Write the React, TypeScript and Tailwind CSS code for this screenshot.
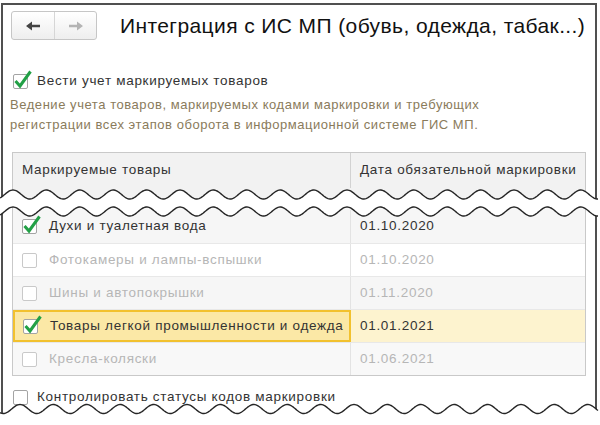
import React from "react";

const P = 33.4;
function wavePts(cy: number, amp: number, phase: number, x0: number, x1: number): [number, number][] {
  const pts: [number, number][] = [];
  for (let x = x0; x <= x1; x += 1) {
    pts.push([x, cy - amp * Math.cos((2 * Math.PI * (x - phase)) / P)]);
  }
  return pts;
}
const toD = (pts: [number, number][], start = true) =>
  pts.map((p, i) => (i === 0 && start ? "M" : "L") + p[0].toFixed(1) + " " + p[1].toFixed(2)).join(" ");

const w1 = wavePts(8.5, 4.5, 13, 0, 598);
const w2 = wavePts(25.5, 4.5, 13, 0, 598);
const tear1Fill = toD(w1) + " " + toD([...w2].reverse(), false) + " Z";
const w3 = wavePts(8, 4.5, 20, 0, 598);
const tear2Fill = toD(w3) + " L600 30 L0 30 Z";

function Check({ checked, disabled }: { checked?: boolean; disabled?: boolean }) {
  return (
    <span
      className={
        "relative inline-block h-[15px] w-[15px] shrink-0 rounded-[2px] border bg-white " +
        (disabled ? "border-[#c9c9c9]" : "border-[#a4a4a4]")
      }
    >
      {checked && (
        <svg className="absolute left-[-1px] top-[-5px]" width="20" height="20" viewBox="0 0 20 20">
          <path d="M2.5 11 L7 16 L17.5 1.5" stroke="#22a046" strokeWidth="3" fill="none" strokeLinejoin="miter" />
        </svg>
      )}
    </span>
  );
}

type Row = { name: string; date: string; checked?: boolean; disabled?: boolean; bg: string; active?: boolean };
const rows: Row[] = [
  { name: "Духи и туалетная вода", date: "01.10.2020", checked: true, bg: "bg-[#f6f6f6]" },
  { name: "Фотокамеры и лампы-вспышки", date: "01.10.2020", disabled: true, bg: "bg-white" },
  { name: "Шины и автопокрышки", date: "01.11.2020", disabled: true, bg: "bg-[#f6f6f6]" },
  { name: "Товары легкой промышленности и одежда", date: "01.01.2021", checked: true, bg: "bg-[#fdf3cf]", active: true },
  { name: "Кресла-коляски", date: "01.06.2021", disabled: true, bg: "bg-[#f8f8f8]" },
];

export default function App() {
  return (
    <div className="flex h-[425px] w-[600px] flex-col overflow-hidden bg-white pt-[3px] font-['Liberation_Sans',Arial,sans-serif] text-[13.5px] tracking-[0.7px] text-[#333]">
      {/* upper part of the form */}
      <div className="ml-[1px] flex h-[202px] w-[596px] shrink-0 flex-col border-2 border-b-0 border-[#505050]">
        <div className="ml-[8px] mt-[6px] flex h-[29px] items-center">
          <div className="flex h-[29px] w-[86px] rounded-[3px] border border-[#c6c6c6] bg-gradient-to-b from-white to-[#eeeeee]">
            <div className="flex w-[43px] items-center justify-center border-r border-[#d6d6d6]">
              <svg width="14" height="10" viewBox="0 0 14 10">
                <path d="M0 5 L6 0.5 L6 3.8 L14 3.8 L14 6.2 L6 6.2 L6 9.5 Z" fill="#444" />
              </svg>
            </div>
            <div className="flex flex-1 items-center justify-center">
              <svg width="14" height="10" viewBox="0 0 14 10">
                <path d="M14 5 L8 0.5 L8 3.8 L0 3.8 L0 6.2 L8 6.2 L8 9.5 Z" fill="#b4b4b4" />
              </svg>
            </div>
          </div>
          <div className="ml-[23px] whitespace-nowrap text-[21px] tracking-[0.4px] text-[#111]">
            Интеграция с ИС МП (обувь, одежда, табак...)
          </div>
        </div>

        <div className="ml-[10px] mt-[31px] flex h-[20px] items-center gap-[9px]">
          <Check checked />
          <span className="whitespace-nowrap">Вести учет маркируемых товаров</span>
        </div>

        <div className="ml-[7px] mt-[4px] text-[13px] leading-[20px] tracking-[0.55px] text-[#8a7b5b]">
          <div className="whitespace-nowrap">Ведение учета товаров, маркируемых кодами маркировки и требующих</div>
          <div className="whitespace-nowrap">регистрации всех этапов оборота в информационной системе ГИС МП.</div>
        </div>

        <div className="mx-[9px] mt-[17px] flex h-[53px] border border-b-0 border-[#c9c9c9] bg-[#f2f2f2]">
          <div className="flex h-[35px] w-[338px] items-center border-r border-[#d2d2d2] pl-[9px]">Маркируемые товары</div>
          <div className="flex h-[35px] flex-1 items-center whitespace-nowrap pl-[9px]">Дата обязательной маркировки</div>
        </div>
      </div>

      {/* torn gap */}
      <div className="relative z-10 mb-[-15px] mt-[-19px] h-[34px] shrink-0">
        <svg width="600" height="34" viewBox="0 0 600 34">
          <path d={tear1Fill} fill="#fff" />
          <path d={toD(w1)} stroke="#262626" strokeWidth="1.4" fill="none" />
          <path d={toD(w2)} stroke="#262626" strokeWidth="1.4" fill="none" />
        </svg>
      </div>

      {/* lower part of the form */}
      <div className="ml-[1px] flex h-[220px] w-[596px] shrink-0 flex-col border-x-2 border-[#505050]">
        <div className="mx-[9px] flex flex-col border border-t-0 border-[#c9c9c9]">
          {rows.map((r, i) => (
            <div
              key={r.name}
              className={
                "flex " + r.bg + " " + (i === 0 ? "h-[38px] pt-[5px]" : "h-[33px] border-t border-[#e8e8e8]")
              }
            >
              <div
                className={
                  "flex w-[338px] items-center gap-[12px] " +
                  (r.active ? "border-2 border-[#f2c12e] bg-[#fbe8a6] pl-[8px]" : "border-r border-[#e3e3e3] pl-[9px]")
                }
              >
                <Check checked={r.checked} disabled={r.disabled} />
                <span className={"whitespace-nowrap " + (r.disabled ? "text-[#b6b6b6]" : "text-[#333]")}>{r.name}</span>
              </div>
              <div className={"flex flex-1 items-center pl-[9px] " + (r.disabled ? "text-[#b6b6b6]" : "text-[#333]")}>
                {r.date}
              </div>
            </div>
          ))}
        </div>

        <div className="ml-[10px] mt-[11px] flex h-[20px] items-center gap-[9px]">
          <Check />
          <span className="whitespace-nowrap">Контролировать статусы кодов маркировки</span>
        </div>
      </div>

      {/* bottom torn edge */}
      <div className="relative z-10 mt-[-24px] h-[24px] shrink-0">
        <svg width="600" height="24" viewBox="0 0 600 24">
          <path d={tear2Fill} fill="#fff" />
          <path d={toD(w3)} stroke="#262626" strokeWidth="1.4" fill="none" />
        </svg>
      </div>
    </div>
  );
}
